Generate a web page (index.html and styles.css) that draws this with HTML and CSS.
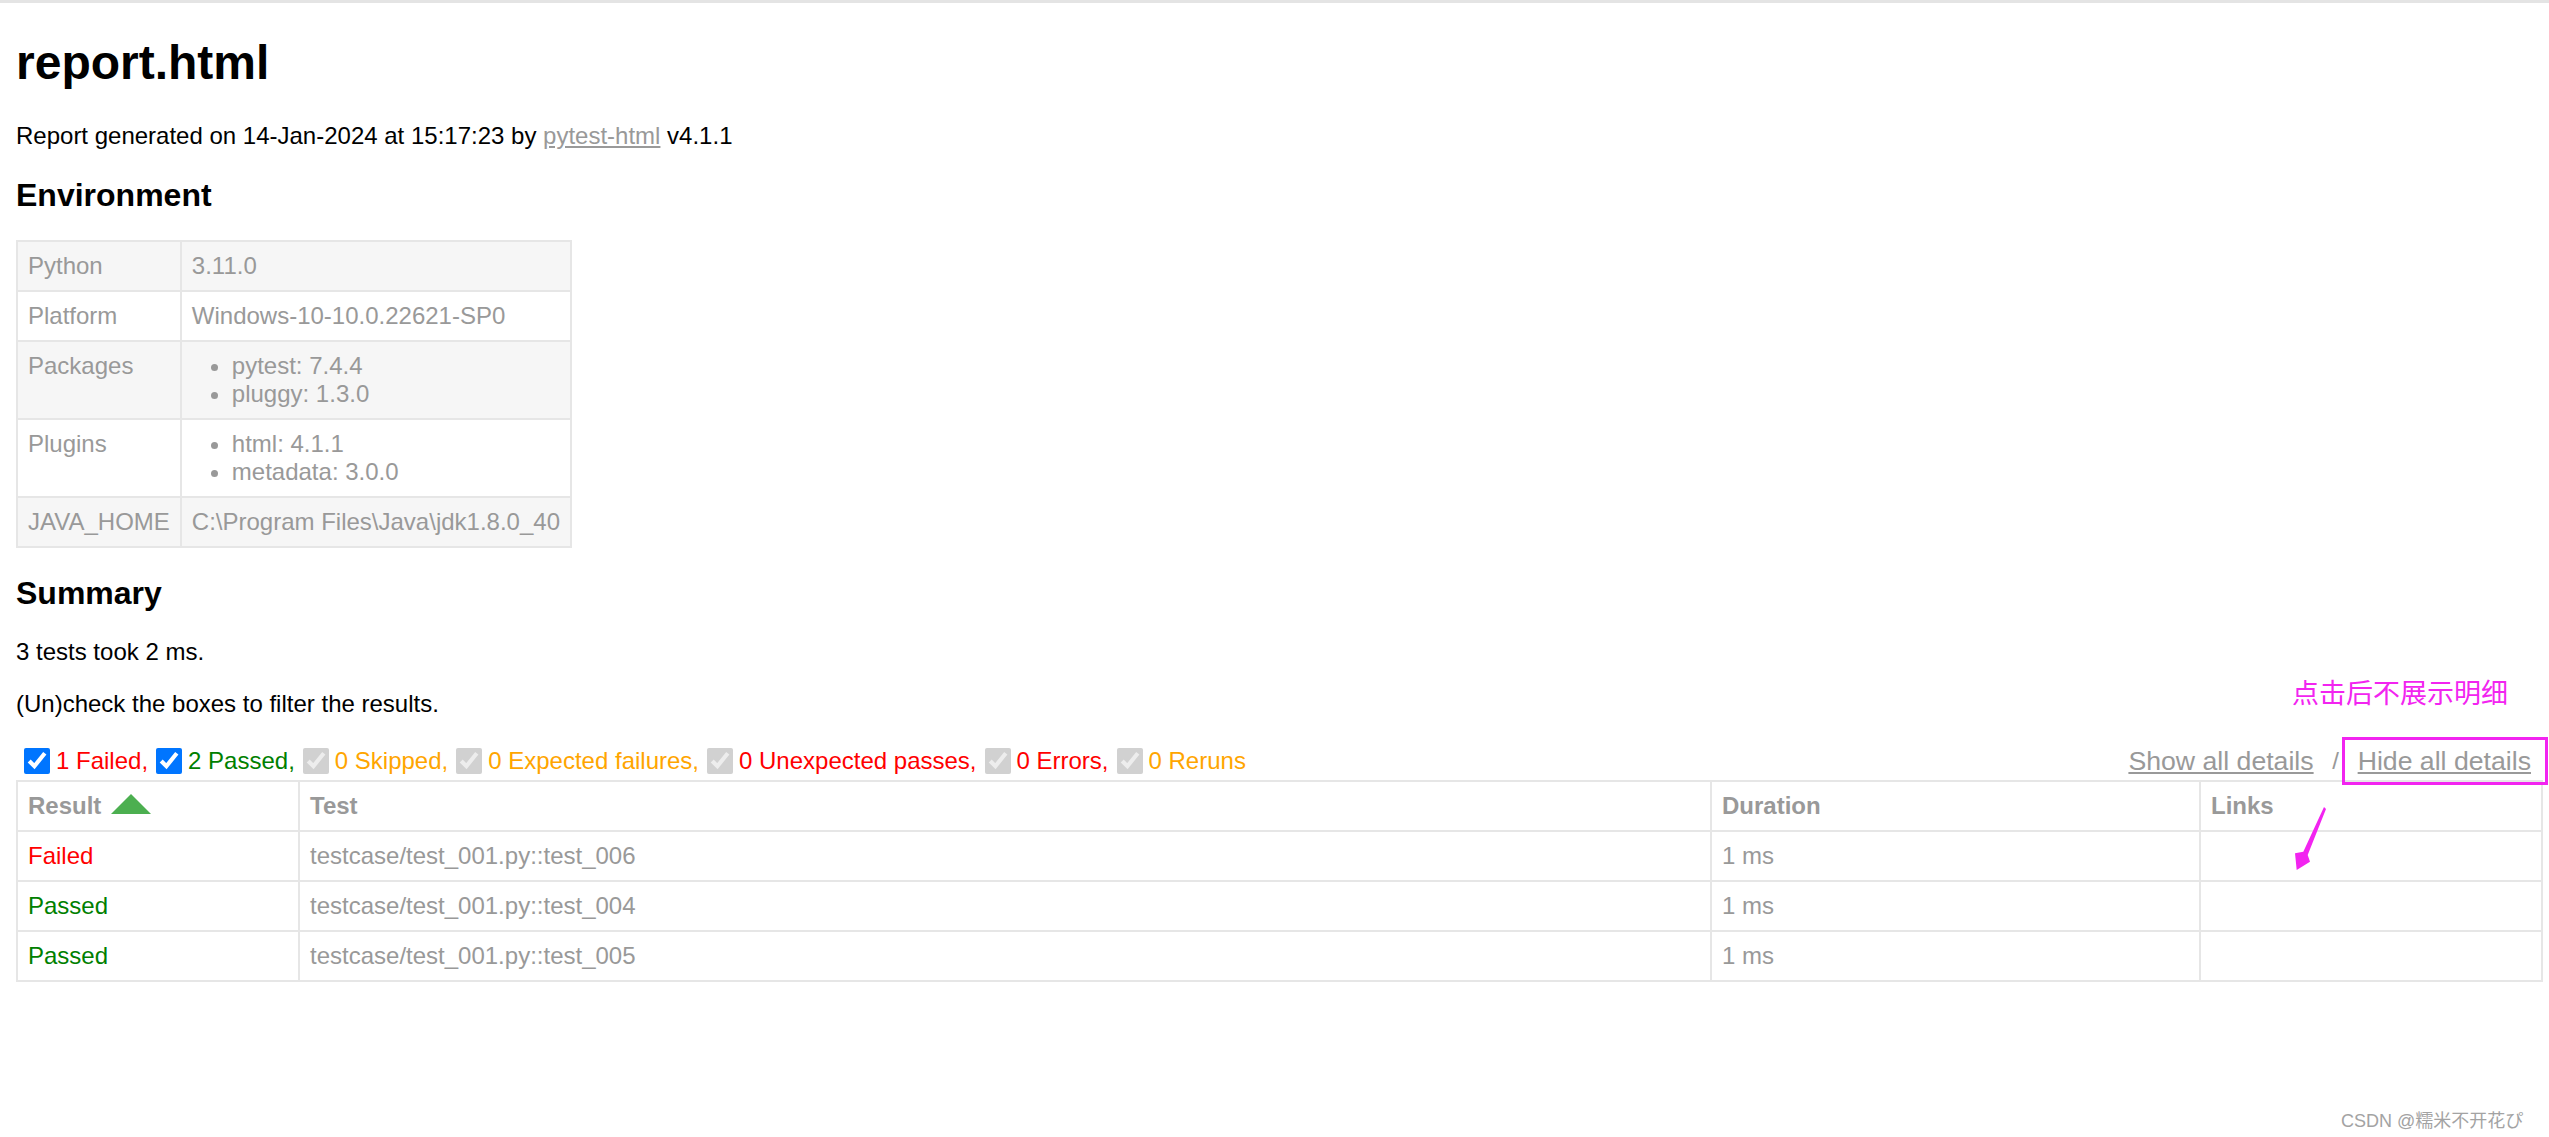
FILE: index.html
```html
<!DOCTYPE html>
<html>
<head>
<meta charset="utf-8">
<title>report.html</title>
<link rel="stylesheet" href="styles.css">
</head>
<body>
<h1>report.html</h1>
<p>Report generated on 14-Jan-2024 at 15:17:23 by <a href="#">pytest-html</a> v4.1.1</p>
<h2>Environment</h2>
<table class="env">
  <tr><td>Python</td><td>3.11.0</td></tr>
  <tr><td>Platform</td><td>Windows-10-10.0.22621-SP0</td></tr>
  <tr><td>Packages</td><td><ul><li>pytest: 7.4.4</li><li>pluggy: 1.3.0</li></ul></td></tr>
  <tr><td>Plugins</td><td><ul><li>html: 4.1.1</li><li>metadata: 3.0.0</li></ul></td></tr>
  <tr><td>JAVA_HOME</td><td>C:\Program Files\Java\jdk1.8.0_40</td></tr>
</table>
<div class="summary">
  <h2>Summary</h2>
  <p>3 tests took 2 ms.</p>
  <p>(Un)check the boxes to filter the results.</p>
  <div class="controls">
    <div class="filters">
      <input type="checkbox" checked><span class="failed">1 Failed,</span>
      <input type="checkbox" checked><span class="passed">2 Passed,</span>
      <input type="checkbox" checked disabled><span class="skipped">0 Skipped,</span>
      <input type="checkbox" checked disabled><span class="xfailed">0 Expected failures,</span>
      <input type="checkbox" checked disabled><span class="xpassed">0 Unexpected passes,</span>
      <input type="checkbox" checked disabled><span class="error">0 Errors,</span>
      <input type="checkbox" checked disabled><span class="rerun">0 Reruns</span>
    </div>
    <div class="collapse">
      <button type="button">Show all details</button><span class="sep">&nbsp;/&nbsp;</span><button type="button">Hide all details</button>
    </div>
  </div>
</div>
<table class="results">
  <colgroup>
    <col class="c-result"><col class="c-test"><col class="c-duration"><col class="c-links">
  </colgroup>
  <thead>
    <tr><th>Result<span class="sort-asc"></span></th><th>Test</th><th>Duration</th><th>Links</th></tr>
  </thead>
  <tbody>
    <tr><td class="res-failed">Failed</td><td>testcase/test_001.py::test_006</td><td>1 ms</td><td></td></tr>
    <tr><td class="res-passed">Passed</td><td>testcase/test_001.py::test_004</td><td>1 ms</td><td></td></tr>
    <tr><td class="res-passed">Passed</td><td>testcase/test_001.py::test_005</td><td>1 ms</td><td></td></tr>
  </tbody>
</table>

<div class="note-label">点击后不展示明细</div>
<div class="note-box"></div>
<svg class="note-arrow" width="40" height="70" viewBox="0 0 40 70">
  <polygon points="32,2 34,4 15.7,50 18,56.7 4.7,65 3,48.3 11.3,46.7" fill="#f224f0"/>
</svg>
<div class="watermark">CSDN @糯米不开花ぴ</div>
</body>
</html>
```
FILE: styles.css
```css
html {
  border-top: 3px solid #e4e4e4;
  background: #fff;
}
body {
  margin: 0 6px 16px 16px;
  font-family: "Liberation Sans", Arial, Helvetica, sans-serif;
  font-size: 24px;
  color: #999;
}
h1 {
  font-size: 48px;
  color: #000;
  margin: 32px 0;
}
h2 {
  font-size: 32px;
  color: #000;
  margin: 0.83em 0;
}
p {
  color: #000;
  margin: 1em 0;
}
a {
  color: #999;
}
table {
  border-collapse: collapse;
}
.env td {
  padding: 10px;
  border: 2px solid #e6e6e6;
  vertical-align: top;
}
.env tr:nth-child(odd) {
  background-color: #f6f6f6;
}
.env ul {
  margin: 0;
  padding: 0 40px;
}
.controls {
  display: flex;
  justify-content: space-between;
  align-items: center;
}
.filters,
.collapse {
  display: flex;
  align-items: center;
}
.filters input {
  width: 26px;
  height: 26px;
  margin: 6px 6px 6px 8px;
}
.failed, .xpassed, .error, .res-failed {
  color: red;
}
.passed, .res-passed {
  color: green;
}
.skipped, .xfailed, .rerun {
  color: orange;
}
.collapse button {
  font-family: "Liberation Sans", Arial, sans-serif;
  font-size: 26.667px;
  color: #999;
  border: none;
  background: none;
  text-decoration: underline;
  padding: 2px 12px;
  cursor: pointer;
}
.sep {
  color: #999;
  font-size: 24px;
}
.results {
  width: 100%;
  table-layout: fixed;
  border: 2px solid #e6e6e6;
  color: #999;
}
.results th,
.results td {
  padding: 10px;
  border: 2px solid #e6e6e6;
  text-align: left;
}
.results th {
  font-weight: bold;
}
.c-result { width: 282px; }
.c-test { width: 1412px; }
.c-duration { width: 489px; }
.sort-asc {
  display: inline-block;
  width: 0;
  height: 0;
  margin-left: 10px;
  margin-top: -20px;
  border-left: 20px solid transparent;
  border-right: 20px solid transparent;
  border-bottom: 20px solid #4caf50;
  vertical-align: baseline;
}
.note-label {
  position: absolute;
  left: 2292px;
  top: 677px;
  font-family: "Noto Sans CJK SC", sans-serif;
  font-size: 27px;
  line-height: 30px;
  color: #f224f0;
  white-space: nowrap;
}
.note-box {
  position: absolute;
  left: 2342px;
  top: 737px;
  width: 200px;
  height: 42px;
  border: 3px solid #f224f0;
}
.note-arrow {
  position: absolute;
  left: 2292px;
  top: 805px;
}
.watermark {
  position: absolute;
  left: 2341px;
  top: 1106px;
  font-family: "Liberation Sans", "Noto Sans CJK SC", sans-serif;
  font-size: 18px;
  color: #a3a3a3;
  white-space: nowrap;
}
```
